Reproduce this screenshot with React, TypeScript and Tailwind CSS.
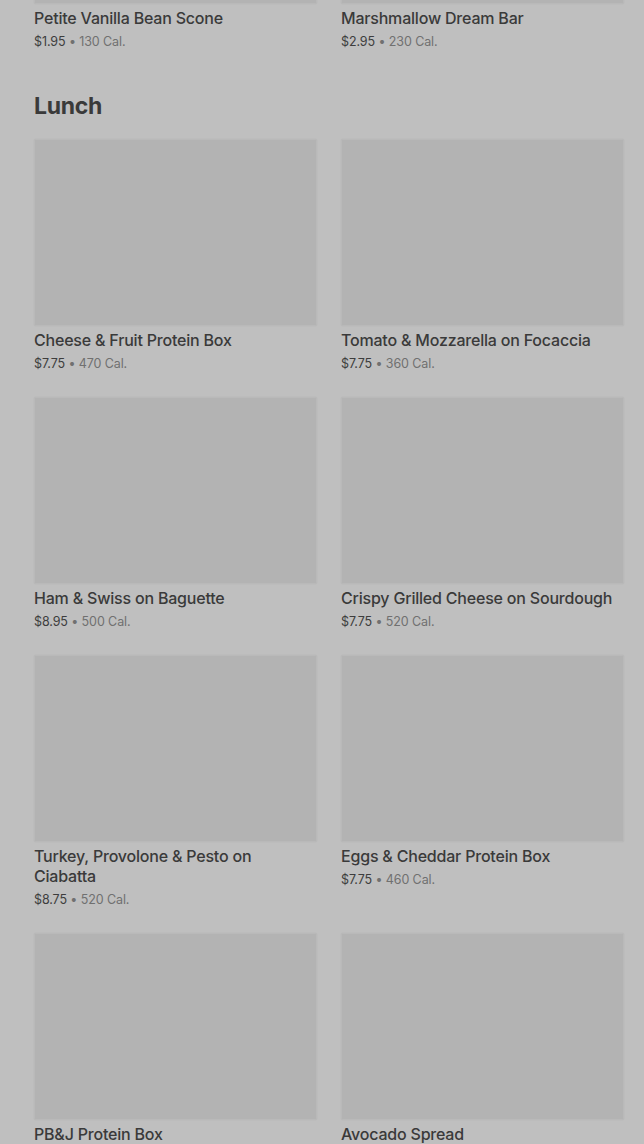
import React from 'react';

type Item = { name: string; price: string; cal: string };

const topItems: Item[] = [
  { name: 'Petite Vanilla Bean Scone', price: '$1.95', cal: '130 Cal.' },
  { name: 'Marshmallow Dream Bar', price: '$2.95', cal: '230 Cal.' },
];

const lunch: Item[] = [
  { name: 'Cheese & Fruit Protein Box', price: '$7.75', cal: '470 Cal.' },
  { name: 'Tomato & Mozzarella on Focaccia', price: '$7.75', cal: '360 Cal.' },
  { name: 'Ham & Swiss on Baguette', price: '$8.95', cal: '500 Cal.' },
  { name: 'Crispy Grilled Cheese on Sourdough', price: '$7.75', cal: '520 Cal.' },
  { name: 'Turkey, Provolone & Pesto on Ciabatta', price: '$8.75', cal: '520 Cal.' },
  { name: 'Eggs & Cheddar Protein Box', price: '$7.75', cal: '460 Cal.' },
  { name: 'PB&J Protein Box', price: '$5.95', cal: '410 Cal.' },
  { name: 'Avocado Spread', price: '$1.50', cal: '90 Cal.' },
];

function Card({ item }: { item: Item }) {
  return (
    <div>
      <div className="h-[187px] rounded-[2px] bg-[#b3b3b3] border border-[#b9b9b9] shadow-[0_0_2px_rgba(0,0,0,0.06)]" />
      <p className="mt-1 text-[16px] leading-5 font-medium text-[#3a3a3a] tracking-[-0.2px]">{item.name}</p>
      <p className="mt-[6px] text-[12.5px] leading-4 tracking-[-0.1px]">
        <span className="text-[#3d3d3d]">{item.price}</span>
        <span className="text-[#707070]"> • {item.cal}</span>
      </p>
    </div>
  );
}

export default function App() {
  return (
    <div className="min-h-[1144px] bg-[#bfbfbf] overflow-hidden pl-[34px] pr-[20px] font-['Inter',sans-serif]">
      {/* previous section, scrolled past */}
      <div className="-mt-[183px] grid grid-cols-2 gap-x-6">
        {topItems.map(i => <Card key={i.name} item={i} />)}
      </div>

      <h2 className="mt-[40px] text-[23px] leading-8 font-bold text-[#3a3a3a] tracking-[-0.3px]">Lunch</h2>

      <div className="mt-[17px] grid grid-cols-2 gap-x-6 gap-y-[25px]">
        {lunch.map(i => <Card key={i.name} item={i} />)}
      </div>
    </div>
  );
}
